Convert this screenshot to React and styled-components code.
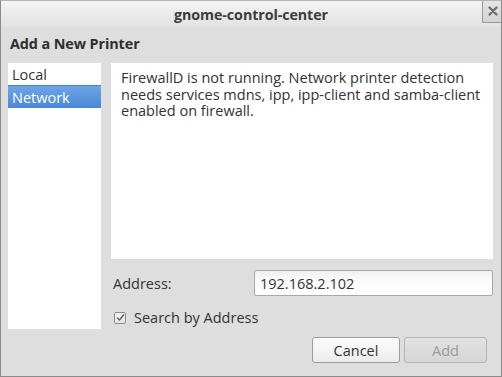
import React from "react";
import styled, { createGlobalStyle } from "styled-components";

const GlobalStyle = createGlobalStyle`
  html, body {
    margin: 0;
    padding: 0;
    background: #dedede;
  }
  body {
    font-family: "Open Sans", "Noto Sans", "DejaVu Sans", sans-serif;
  }
`;

const Window = styled.div`
  width: 502px;
  height: 377px;
  box-sizing: border-box;
  border: 1px solid #8a8a8a;
  border-top-color: #b5b5b5;
  background: #dedede;
  display: flex;
  flex-direction: column;
  overflow: hidden;
`;

const TitleBar = styled.div`
  position: relative;
  height: 26px;
  flex: none;
  display: flex;
  align-items: center;
  justify-content: center;
  background: linear-gradient(#f4f4f4, #e2e2e2);
  font-size: 14.3px;
  font-weight: 700;
  color: #3c3c3c;
  letter-spacing: -0.1px;
`;

const CloseButton = styled.div`
  position: absolute;
  top: -1px;
  right: -1px;
  width: 20px;
  height: 23px;
  box-sizing: border-box;
  border: 1px solid #9a9a9a;
  border-top: none;
  border-right: none;
  background: linear-gradient(#e6e6e6, #d4d4d4);
  display: flex;
  align-items: center;
  justify-content: center;
`;

const Heading = styled.div`
  padding: 7px 9px 0;
  height: 27px;
  box-sizing: border-box;
  font-size: 14.4px;
  font-weight: 700;
  color: #2e2e2e;
  letter-spacing: -0.1px;
`;

const Body = styled.div`
  display: flex;
  gap: 10px;
  padding: 9px 8px 0 7px;
  flex: 1;
`;

const SideList = styled.div`
  width: 93px;
  height: 266px;
  background: #fff;
  display: flex;
  flex-direction: column;
`;

const ListItem = styled.div`
  height: 22px;
  display: flex;
  align-items: center;
  padding-left: 4px;
  font-size: 14.5px;
  color: ${(p) => (p.selected ? "#fff" : "#333")};
  background: ${(p) =>
    p.selected ? "linear-gradient(#6ea5e6, #4a87d6)" : "transparent"};
  border-top: ${(p) => (p.selected ? "1px solid #4a80c8" : "none")};
`;

const Main = styled.div`
  flex: 1;
  display: flex;
  flex-direction: column;
`;

const Message = styled.div`
  height: 196px;
  background: #fff;
  padding: 7px 10px 5px 10px;
  box-sizing: border-box;
  font-size: 14.5px;
  line-height: 16.5px;
  color: #333;
`;

const FormRow = styled.div`
  display: flex;
  align-items: center;
  margin-top: 11px;
  padding-left: 2px;
`;

const Label = styled.div`
  width: 141px;
  font-size: 14.5px;
  color: #333;
`;

const Input = styled.div`
  width: 239px;
  height: 26px;
  box-sizing: border-box;
  border: 1px solid #a8a8a8;
  border-radius: 2px;
  background: linear-gradient(#f0f0f0, #fbfbfb 40%, #fff);
  display: flex;
  align-items: center;
  padding-left: 5px;
  font-size: 14.5px;
  color: #333;
`;

const CheckRow = styled.label`
  display: flex;
  align-items: center;
  gap: 8px;
  margin-top: 12px;
  padding-left: 3px;
  font-size: 14.5px;
  color: #333;
`;

const Box = styled.span`
  width: 12px;
  height: 12px;
  box-sizing: border-box;
  border: 1px solid #8c8c8c;
  border-radius: 2px;
  background: linear-gradient(#f4f4f4, #e4e4e4);
  display: flex;
  align-items: center;
  justify-content: center;
`;

const Buttons = styled.div`
  display: flex;
  justify-content: flex-end;
  gap: 4px;
  margin-top: 10px;
  padding-right: 6px;
`;

const Button = styled.div`
  width: ${(p) => p.w}px;
  height: 26px;
  box-sizing: border-box;
  border: 1px solid ${(p) => (p.disabled ? "#b4b4b4" : "#9c9c9c")};
  border-radius: 3px;
  background: ${(p) =>
    p.disabled
      ? "linear-gradient(#e2e2e2, #d6d6d6)"
      : "linear-gradient(#fdfdfd, #ebebeb)"};
  display: flex;
  align-items: center;
  justify-content: center;
  font-size: 14.5px;
  color: ${(p) => (p.disabled ? "#9a9a9a" : "#333")};
`;

export default function App() {
  return (
    <>
      <GlobalStyle />
      <Window>
        <TitleBar>
          gnome-control-center
          <CloseButton>
            <svg width="10" height="10" viewBox="0 0 10 10">
              <path
                d="M1.5 1.5 L8.5 8.5 M8.5 1.5 L1.5 8.5"
                stroke="#6a6a6a"
                strokeWidth="2.2"
                strokeLinecap="round"
              />
            </svg>
          </CloseButton>
        </TitleBar>
        <Heading>Add a New Printer</Heading>
        <Body>
          <SideList>
            <ListItem>Local</ListItem>
            <ListItem selected>Network</ListItem>
          </SideList>
          <Main>
            <Message>
              FirewallD is not running. Network printer detection needs services
              mdns, ipp, ipp-client and samba-client enabled on firewall.
            </Message>
            <FormRow>
              <Label>Address:</Label>
              <Input>192.168.2.102</Input>
            </FormRow>
            <CheckRow>
              <Box>
                <svg width="9" height="9" viewBox="0 0 9 9">
                  <path
                    d="M1.2 4.6 L3.5 7 L8 1.5"
                    stroke="#555"
                    strokeWidth="1.3"
                    fill="none"
                  />
                </svg>
              </Box>
              Search by Address
            </CheckRow>
            <Buttons>
              <Button w={88}>Cancel</Button>
              <Button w={83} disabled>
                Add
              </Button>
            </Buttons>
          </Main>
        </Body>
      </Window>
    </>
  );
}
